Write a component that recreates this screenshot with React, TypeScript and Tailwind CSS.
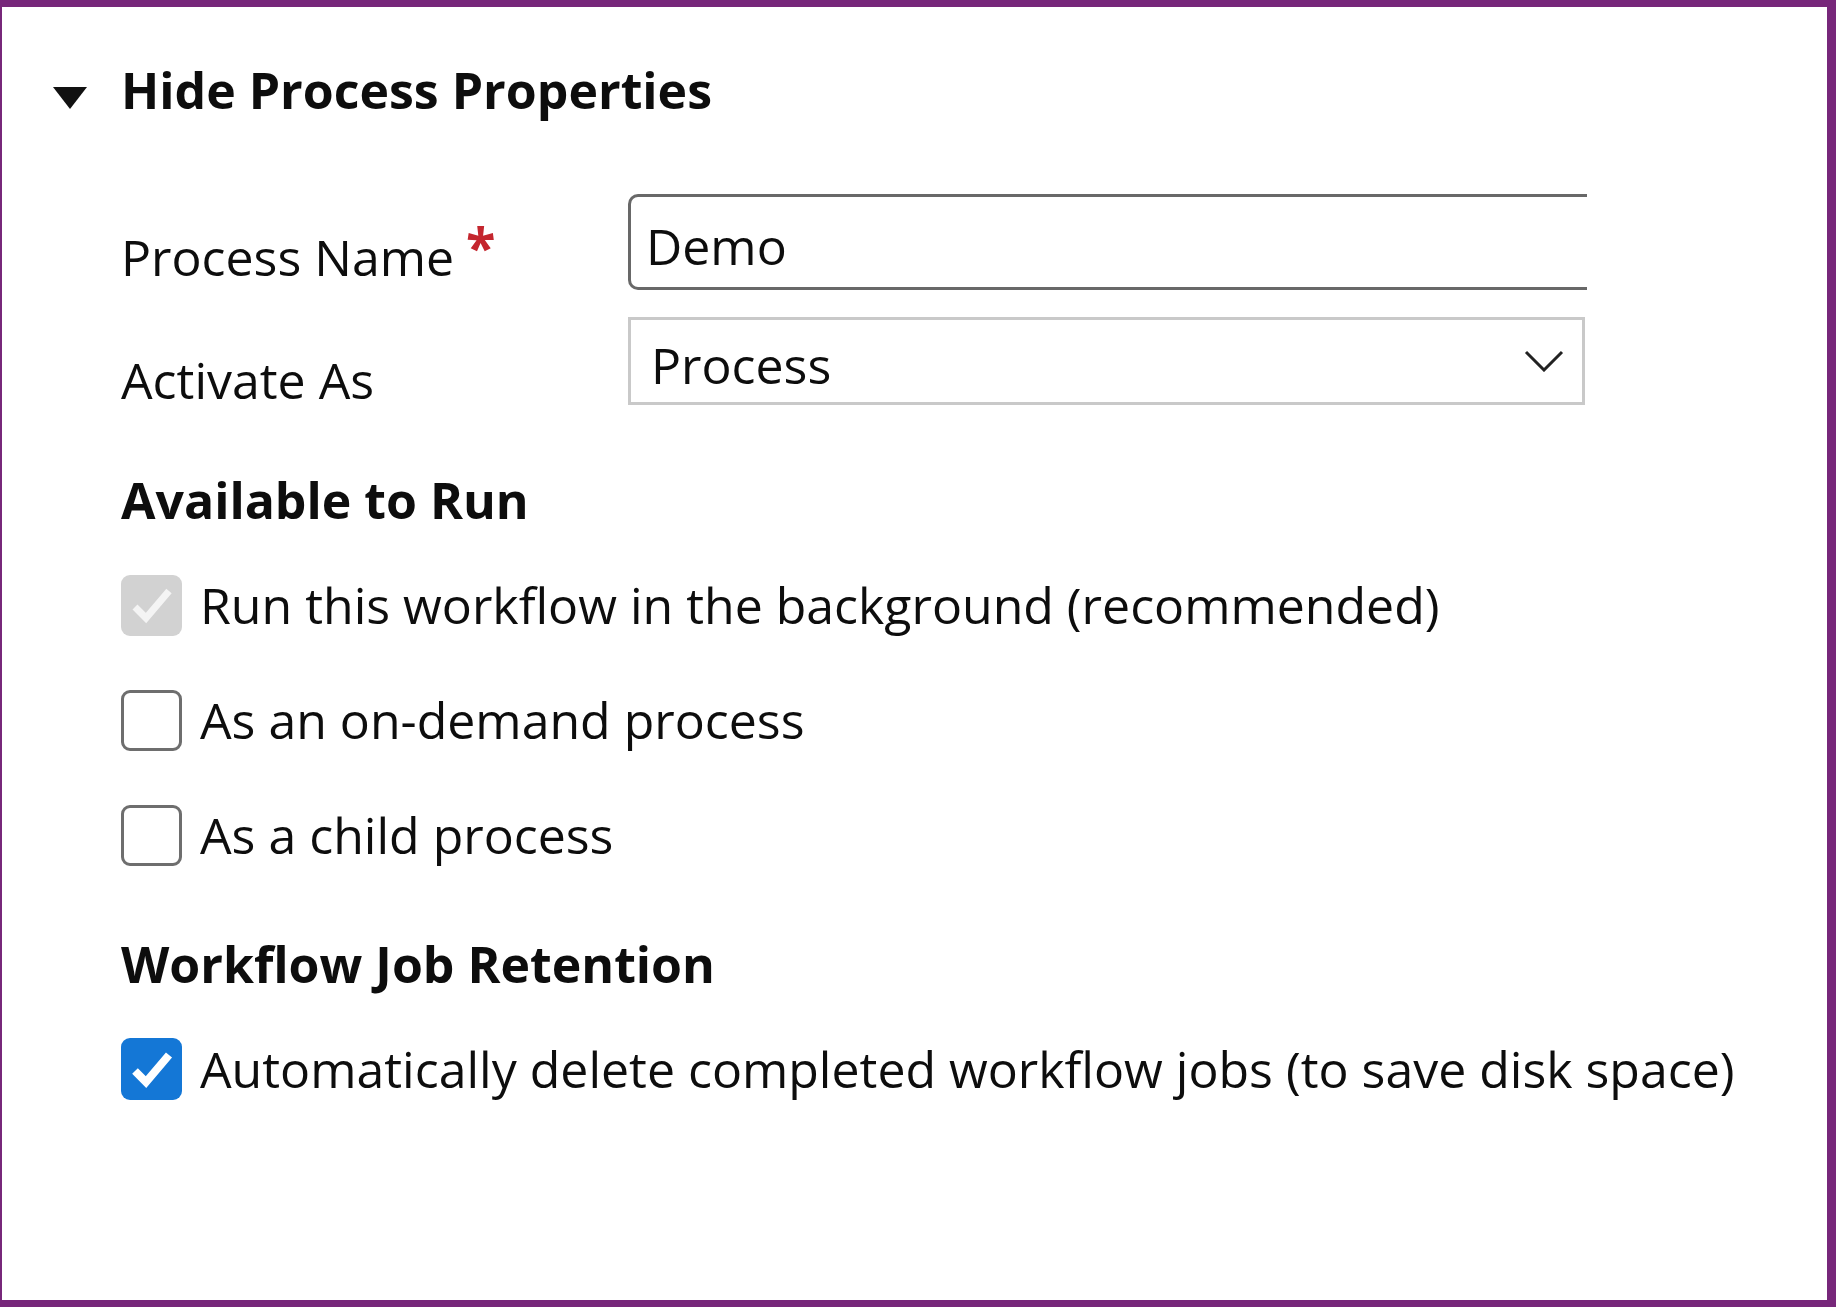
import React from "react";

const CheckRow = ({
  label,
  state,
}: {
  label: string;
  state: "disabled" | "off" | "on";
}) => {
  return (
    <label className="flex items-center gap-[18px] h-[62px]">
      {state === "disabled" && (
        <span className="w-[61px] h-[61px] rounded-[9px] bg-[#d2d2d2] flex items-center justify-center">
          <svg width="46" height="40" viewBox="0 0 46 40">
            <path d="M6 22 L17 33 L40 6" fill="none" stroke="#f4f4f4" strokeWidth="7" />
          </svg>
        </span>
      )}
      {state === "off" && (
        <span className="w-[61px] h-[61px] rounded-[9px] border-[3px] border-[#6e6e6e] bg-white" />
      )}
      {state === "on" && (
        <span className="w-[61px] h-[62px] rounded-[9px] bg-[#1477d6] flex items-center justify-center">
          <svg width="46" height="40" viewBox="0 0 46 40">
            <path d="M6 22 L17 33 L40 6" fill="none" stroke="#ffffff" strokeWidth="8" />
          </svg>
        </span>
      )}
      <span>{label}</span>
    </label>
  );
};

const App = () => {
  return (
    <div
      className="w-[1836px] h-[1307px] bg-white border-t-[7px] border-b-[7px] border-l-[2px] border-r-[9px] border-[#77277a] overflow-hidden text-[#0d0d0d] text-[50px] leading-none"
      style={{ fontFamily: '"Open Sans", "Noto Sans", sans-serif' }}
    >
      {/* header */}
      <div className="flex items-center pl-[51px] pt-[58px]">
        <svg width="34" height="22" viewBox="0 0 34 22" className="mt-[16px]">
          <path d="M0 0 H34 L17 22 Z" fill="#111" />
        </svg>
        <h2 className="ml-[34px] font-bold">Hide Process Properties</h2>
      </div>

      <div className="pl-[119px] pt-[79px]">
        {/* Process name */}
        <div className="flex items-center h-[96px]">
          <div className="w-[507px] flex items-start pt-[30px]">
            <span>Process Name</span>
            <span className="text-[#c4262e] font-bold text-[54px] ml-[12px] -mt-[13px]">*</span>
          </div>
          <div className="w-[959px] h-[96px] border-[3px] border-r-0 border-[#686868] rounded-l-[10px] flex items-center pl-[15px] pt-[8px]">
            Demo
          </div>
        </div>

        {/* Activate As */}
        <div className="flex items-center h-[88px] mt-[27px]">
          <div className="w-[507px] pt-[38px]">Activate As</div>
          <div className="w-[957px] h-[88px] border-[3px] border-[#c9c9c9] flex items-center justify-between pl-[20px] pr-[18px]">
            <span className="pt-[8px]">Process</span>
            <svg width="40" height="22" viewBox="0 0 40 22">
              <path d="M2 2 L20 20 L38 2" fill="none" stroke="#222" strokeWidth="3" />
            </svg>
          </div>
        </div>

        {/* Available to Run */}
        <h3 className="font-bold mt-[70px]">Available to Run</h3>
        <div className="flex flex-col gap-[53px] mt-[49px]">
          <CheckRow state="disabled" label="Run this workflow in the background (recommended)" />
          <CheckRow state="off" label="As an on-demand process" />
          <CheckRow state="off" label="As a child process" />
        </div>

        {/* Retention */}
        <h3 className="font-bold mt-[73px]">Workflow Job Retention</h3>
        <div className="mt-[49px]">
          <CheckRow state="on" label="Automatically delete completed workflow jobs (to save disk space)" />
        </div>
      </div>
    </div>
  );
};

export default App;
